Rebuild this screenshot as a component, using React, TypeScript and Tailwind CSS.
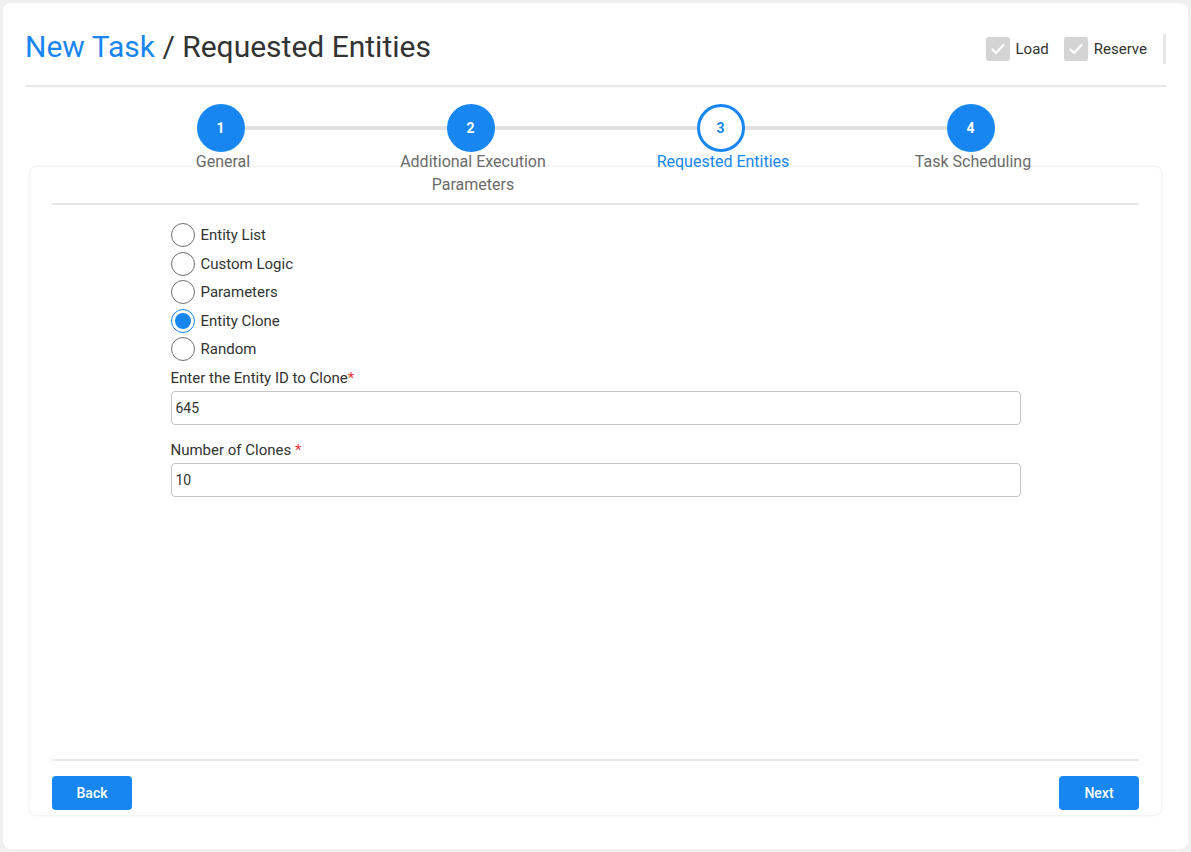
import { useState } from "react";

const steps = [
  { n: 1, label: "General" },
  { n: 2, label: "Additional Execution Parameters" },
  { n: 3, label: "Requested Entities" },
  { n: 4, label: "Task Scheduling" },
];

const options = ["Entity List", "Custom Logic", "Parameters", "Entity Clone", "Random"];

function GrayCheck({ label }: { label: string }) {
  return (
    <label className="flex items-center gap-[6px] text-[15px] text-[#333]">
      <span className="flex h-6 w-6 items-center justify-center rounded-[3px] bg-[#d4d4d4]">
        <svg width="16" height="16" viewBox="0 0 16 16" fill="none">
          <path d="M2.5 8.5l3.5 3.5 7.5-8" stroke="white" strokeWidth="2.2" strokeLinecap="round" strokeLinejoin="round" />
        </svg>
      </span>
      {label}
    </label>
  );
}

function Stepper({ current }: { current: number }) {
  return (
    <div className="relative z-10 mx-auto mt-[17px] grid w-[1000px] grid-cols-4">
      {steps.map((s, i) => (
        <div key={s.n} className="relative flex flex-col items-center">
          {i < steps.length - 1 && (
            <div className="absolute left-1/2 top-[22px] h-1 w-full bg-[#e2e2e2]" />
          )}
          {s.n === current ? (
            <div className="relative flex h-12 w-12 items-center justify-center rounded-full border-[3px] border-[#1786f0] bg-white text-sm font-bold text-[#1786f0]">
              {s.n}
            </div>
          ) : (
            <div className="relative flex h-12 w-12 items-center justify-center rounded-full bg-[#1786f0] text-sm font-bold text-white">
              {s.n}
            </div>
          )}
          <div
            className={
              "-mt-[2px] w-[170px] pl-[5px] text-center text-base leading-[23px] " +
              (s.n === current ? "text-[#1786f0]" : "text-[#6b6b6b]")
            }
          >
            {s.label}
          </div>
        </div>
      ))}
    </div>
  );
}

export default function App() {
  const [selected, setSelected] = useState("Entity Clone");
  const [entityId, setEntityId] = useState("645");
  const [clones, setClones] = useState("10");

  return (
    <div className="h-[852px] bg-[#f0f0f0] p-[3px] font-['Roboto',sans-serif]">
      <div className="flex h-full flex-col rounded-lg bg-white px-[22px]">
        <div className="flex h-[84px] items-center justify-between border-b-2 border-[#e8e8e8] pt-[6px]">
          <h1 className="text-[30px] leading-9 text-[#333]">
            <span className="text-[#1786f0]">New Task</span> / Requested Entities
          </h1>
          <div className="flex items-center gap-[15px] pt-[4px]">
            <GrayCheck label="Load" />
            <GrayCheck label="Reserve" />
            <div className="ml-[1px] h-[30px] w-[3px] bg-[#e8e8e8]" />
          </div>
        </div>

        <Stepper current={3} />

        <div className="mx-[5px] -mt-[29px] mb-[34px] flex flex-1 flex-col rounded-md bg-white px-[22px] pb-[5px] pt-[36px] shadow-[0_0_3px_rgba(0,0,0,0.12)]">
          <div className="border-b-2 border-[#e8e8e8]" />
          <div className="mx-auto mt-[16px] flex w-[850px] flex-1 flex-col">
            {options.map((o) => (
              <label key={o} className="flex h-[28.5px] items-center gap-[6px] text-[15px] text-[#333]">
                <span
                  onClick={() => setSelected(o)}
                  className={
                    "flex h-6 w-6 items-center justify-center rounded-full border " +
                    (selected === o ? "border-[#1786f0]" : "border-[#6f6f6f]")
                  }
                >
                  {selected === o && <span className="h-4 w-4 rounded-full bg-[#1786f0]" />}
                </span>
                {o}
              </label>
            ))}
            <div className="mt-[4px] text-[15px] leading-5 text-[#333]">
              Enter the Entity ID to Clone<span className="text-[#e53935]">*</span>
            </div>
            <input
              value={entityId}
              onChange={(e) => setEntityId(e.target.value)}
              className="mt-[3px] h-[34px] rounded border border-[#c4c4c4] px-[4px] text-sm text-[#333] outline-none"
            />
            <div className="mt-[15px] text-[15px] leading-5 text-[#333]">
              Number of Clones <span className="text-[#e53935]">*</span>
            </div>
            <input
              value={clones}
              onChange={(e) => setClones(e.target.value)}
              className="mt-[3px] h-[34px] rounded border border-[#c4c4c4] px-[4px] text-sm text-[#333] outline-none"
            />
          </div>
          <div className="border-b-2 border-[#e8e8e8]" />
          <div className="mt-[15px] flex justify-between">
            <button className="h-[34px] w-20 rounded bg-[#1786f0] text-sm font-medium text-white">Back</button>
            <button className="h-[34px] w-20 rounded bg-[#1786f0] text-sm font-medium text-white">Next</button>
          </div>
        </div>
      </div>
    </div>
  );
}
